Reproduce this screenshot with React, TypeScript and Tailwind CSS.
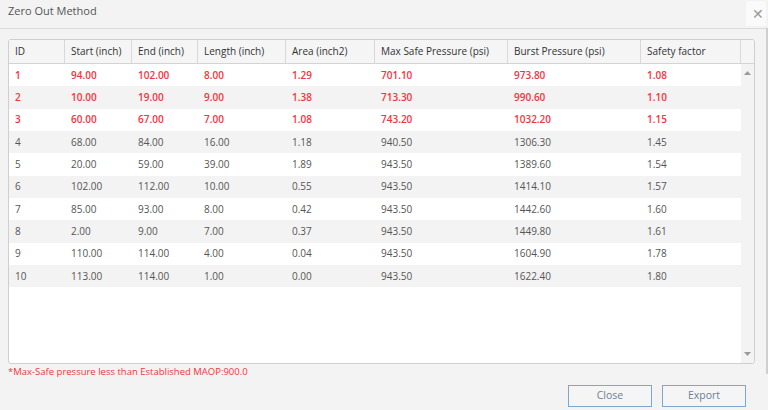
const rows = [
  ["1", "94.00", "102.00", "8.00", "1.29", "701.10", "973.80", "1.08"],
  ["2", "10.00", "19.00", "9.00", "1.38", "713.30", "990.60", "1.10"],
  ["3", "60.00", "67.00", "7.00", "1.08", "743.20", "1032.20", "1.15"],
  ["4", "68.00", "84.00", "16.00", "1.18", "940.50", "1306.30", "1.45"],
  ["5", "20.00", "59.00", "39.00", "1.89", "943.50", "1389.60", "1.54"],
  ["6", "102.00", "112.00", "10.00", "0.55", "943.50", "1414.10", "1.57"],
  ["7", "85.00", "93.00", "8.00", "0.42", "943.50", "1442.60", "1.60"],
  ["8", "2.00", "9.00", "7.00", "0.37", "943.50", "1449.80", "1.61"],
  ["9", "110.00", "114.00", "4.00", "0.04", "943.50", "1604.90", "1.78"],
  ["10", "113.00", "114.00", "1.00", "0.00", "943.50", "1622.40", "1.80"],
];

const headers = [
  "ID",
  "Start (inch)",
  "End (inch)",
  "Length (inch)",
  "Area (inch2)",
  "Max Safe Pressure (psi)",
  "Burst Pressure (psi)",
  "Safety factor",
];

// column widths incl. right border
const widths = ["w-[56px]", "w-[67px]", "w-[66px]", "w-[88px]", "w-[89px]", "w-[133px]", "w-[133px]", "w-[100px]"];

export default function App() {
  return (
    <div
      className="w-[768px] h-[410px] bg-[#f3f3f3] overflow-hidden flex"
      style={{ fontFamily: '"Open Sans", "Liberation Sans", sans-serif' }}
    >
      <div className="w-[766px] flex flex-col">
        {/* title bar */}
        <div className="h-[29px] border-b border-[#dadada] flex items-start justify-between">
          <div className="pl-2 pt-[3px] text-[11px] text-[#555]">Zero Out Method</div>
          <div className="w-[20px] h-[25px] bg-[#fafafa] flex items-center justify-center text-[14px] text-[#999] mt-[1px] pl-[3px]">
            ✕
          </div>
        </div>

        {/* table */}
        <div className="mt-[10px] ml-2 w-[747px] h-[325px] border border-[#cfcfcf] rounded-[3px] bg-white flex flex-col overflow-hidden">
          <div className="flex h-[24px] border-b border-[#d4d4d4] bg-[#f5f5f5] shrink-0">
            {headers.map((h, i) => (
              <div
                key={h}
                className={`${widths[i]} border-r border-[#d9d9d9] pl-[6px] flex items-center text-[10px] text-[#333]`}
              >
                {h}
              </div>
            ))}
            <div className="w-[13px]" />
          </div>
          <div className="flex flex-1">
            <div className="w-[732px] flex flex-col">
              {rows.map((r, ri) => {
                const red = ri < 3;
                return (
                  <div
                    key={r[0]}
                    className={`flex h-[22.33px] items-center ${ri % 2 === 1 ? "bg-[#f3f3f3]" : "bg-white"} ${
                      red ? "text-[#f5333f] font-semibold" : "text-[#555]"
                    } text-[10px]`}
                  >
                    {r.map((c, ci) => (
                      <div key={ci} className={`${widths[ci]} pl-[6px]`}>
                        {c}
                      </div>
                    ))}
                  </div>
                );
              })}
            </div>
            <div className="w-[13px] bg-[#f3f3f3] flex flex-col justify-between items-center py-[7px]">
              <svg width="7" height="4" viewBox="0 0 7 4">
                <path d="M0 4 L3.5 0 L7 4 Z" fill="#9a9a9a" />
              </svg>
              <svg width="7" height="4" viewBox="0 0 7 4">
                <path d="M0 0 L3.5 4 L7 0 Z" fill="#9a9a9a" />
              </svg>
            </div>
          </div>
        </div>

        <div className="ml-2 mt-[1px] text-[9.5px] text-[#f5333f]">
          *Max-Safe pressure less than Established MAOP:900.0
        </div>

        <div className="flex justify-end gap-[10px] pr-[20px] mt-[6px]">
          <button className="w-[84px] h-[22px] border border-[#7fa6cf] bg-[#f5f5f5] text-[10.5px] text-[#6f7f93]">
            Close
          </button>
          <button className="w-[84px] h-[22px] border border-[#7fa6cf] bg-[#f5f5f5] text-[10.5px] text-[#6f7f93]">
            Export
          </button>
        </div>
      </div>
      <div className="w-[2px] mt-[28px] h-[346px] bg-[#cfcfcf]" />
    </div>
  );
}
